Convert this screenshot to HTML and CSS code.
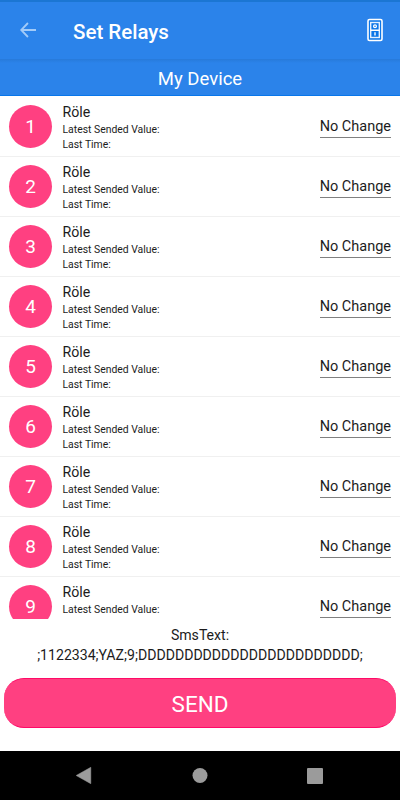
FILE: index.html
```html
<!DOCTYPE html>
<html lang="en">
<head>
<meta charset="utf-8">
<title>Set Relays</title>
<link rel="stylesheet" href="styles.css">
</head>
<body>
<header class="appbar">
  <svg class="back" width="18" height="18" viewBox="0 0 18 18"><path d="M17 8.100H4.500l5.100-5.300L8.300 1.300 1 9l7.300 7.700 1.300-1.500-5.100-5.300H17z"/></svg>
  <h1 class="title">Set Relays</h1>
  <svg class="switch" width="18" height="26" viewBox="0 0 18 26">
    <rect x="2" y="2.500" width="14" height="21" rx="1.500" fill="#0b76e8" stroke="#fff" stroke-width="1.600"/>
    <rect x="4.700" y="5.500" width="8.600" height="15" fill="none" stroke="#e4f0ff" stroke-width="1.400"/>
    <path d="M4.500 13.200h9M9 15.200v3.300" stroke="#fff" stroke-width="1.400"/>
    <circle cx="9" cy="9.200" r="1.400" fill="none" stroke="#fff" stroke-width="1.300"/>
  </svg>
</header>
<div class="device">My Device</div>
<main class="list" id="list"></main>
<section class="sms"><div>SmsText:</div><div class="code">;1122334;YAZ;9;DDDDDDDDDDDDDDDDDDDDDDDD;</div></section>
<button class="send">SEND</button>
<nav class="nav">
  <svg width="400" height="49" viewBox="0 0 400 49" fill="#9b9b9b"><path d="M90.800 16.300v16.400L76.200 24.500z" stroke="#9b9b9b" stroke-linejoin="round" stroke-width=".5"/><circle cx="200" cy="24.500" r="7.500"/><rect x="307" y="17" width="16" height="16" rx="1"/></svg>
</nav>
<script src="app.js"></script>
</body>
</html>
```
FILE: styles.css
```css
* { box-sizing: border-box; }
body {
  margin: 0;
  height: 800px;
  display: flex;
  flex-direction: column;
  overflow: hidden;
  background: #fff;
  color: #1c1c1c;
  font-family: Roboto, sans-serif;
}
.appbar {
  height: 59px;
  flex: none;
  display: flex;
  align-items: center;
  padding: 0 16px 1px 19px;
  background: #2b83ea;
  border-top: 2px solid #1b76d3;
}
.back { fill: #a3cbf8; }
.title {
  flex: 1;
  margin: 3px 0 0 36px;
  color: #fff;
  font-size: 20.5px;
  font-weight: 500;
  line-height: 24px;
}
.device {
  height: 37px;
  flex: none;
  background: linear-gradient(#277ada, #2b83ea 4px);
  border-bottom: 1px solid #0876ea;
  color: #fff;
  font-size: 18.5px;
  line-height: 41px;
  text-align: center;
}
.list { height: 523px; flex: none; overflow: hidden; }
.row {
  height: 60px;
  display: flex;
  align-items: flex-start;
  padding: 8px 9px 0;
}
.row + .row { border-top: 1px solid #f0f0f0; padding-top: 7px; }
.badge {
  width: 43px;
  height: 43px;
  margin-top: 0.5px;
  border-radius: 50%;
  background: #ff4081;
  color: #fff;
  font-size: 19px;
  line-height: 44px;
  text-align: center;
}
.info { flex: 1; margin-left: 10.5px; font-size: 10.4px; line-height: 15px; }
.name { height: 18px; font-size: 14.2px; line-height: 17px; }
.value {
  margin-top: 13px;
  height: 21px;
  border-bottom: 1px solid #808080;
  font-size: 14.5px;
  line-height: 19px;
}
.sms {
  height: 59px;
  flex: none;
  padding-top: 7px;
  font-size: 14.1px;
  line-height: 19px;
  text-align: center;
}
.code { padding-top: 1px; }
.send {
  height: 50px;
  flex: none;
  margin: 0 4px;
  padding: 2px 0 0;
  border: 1px solid #ff0a67;
  border-width: 1px 0;
  border-radius: 20px;
  background: #ff4081;
  color: #fff;
  font: 22.5px Roboto, sans-serif;
}
.nav {
  height: 49px;
  flex: none;
  margin-top: auto;
  background: #000;
}
.nav svg { display: block; }
```
FILE: app.js
```js
const list = document.getElementById("list");
for (let n = 1; n <= 9; n++) {
  list.insertAdjacentHTML("beforeend", `<article class="row">
    <div class="badge">${n}</div>
    <div class="info"><div class="name">Röle</div><div>Latest Sended Value:</div><div>Last Time:</div></div>
    <div class="value">No Change</div>
  </article>`);
}
```
